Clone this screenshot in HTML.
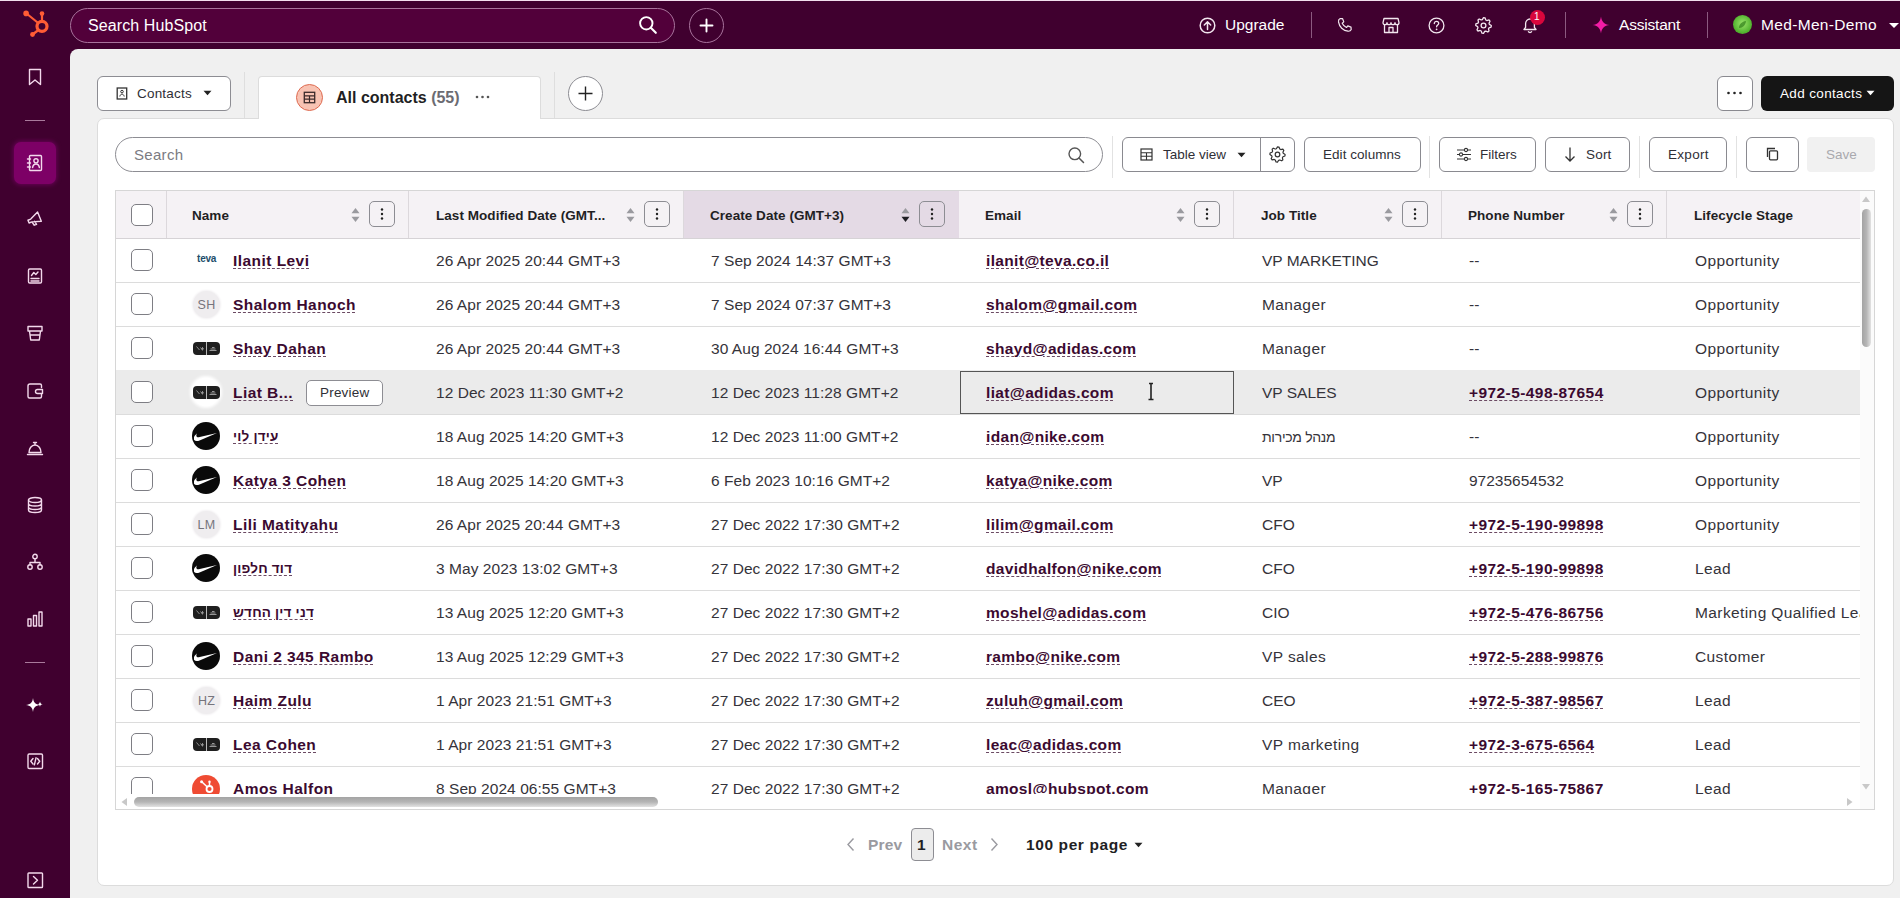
<!DOCTYPE html>
<html><head><meta charset="utf-8">
<style>
*{box-sizing:border-box;margin:0;padding:0}
html,body{width:1900px;height:898px;overflow:hidden;background:#40002f;font-family:"Liberation Sans",sans-serif;color:#2e2d33}
.a{position:absolute}
svg{display:block;position:absolute}
.t{position:absolute;white-space:nowrap;line-height:1}
.btn{position:absolute;background:#fff;border:1px solid #8a8a90;border-radius:6px}
.sep{position:absolute;width:1px;background:#d6d6d6}
.lk{color:#3b0a30;font-weight:700;text-decoration:underline dashed #6b4a63;text-decoration-thickness:1px;text-underline-offset:2px}
.cb{position:absolute;width:22px;height:22px;border:1.3px solid #7e7e84;border-radius:5px;background:#fff}
</style></head><body>

<div class="a" style="left:0;top:0;width:1900px;height:1px;background:#f3dfee"></div>
<svg style="left:20px;top:8px" width="32" height="32" viewBox="0 0 32 32">
 <g stroke="#ff5c35" fill="none" stroke-linecap="round">
  <circle cx="22" cy="18.3" r="5" stroke-width="3.2"/>
  <line x1="22" y1="13" x2="22" y2="6" stroke-width="2.2"/>
  <line x1="18.2" y1="15" x2="6.5" y2="5.5" stroke-width="2.2"/>
  <line x1="18.5" y1="22" x2="12.5" y2="26.5" stroke-width="2.4"/>
 </g>
 <circle cx="22" cy="5.6" r="2.3" fill="#ff5c35"/>
 <circle cx="6.1" cy="5.4" r="2.8" fill="#ff5c35"/>
 <circle cx="12.5" cy="26.5" r="2.4" fill="#ff5c35"/>
</svg>
<div class="a" style="left:70px;top:8px;width:605px;height:35px;border:1px solid #a8739c;border-radius:18px;background:#52003a"></div>
<div class="t" style="left:88px;top:18px;font-size:16px;color:#fff;letter-spacing:0.1px">Search HubSpot</div>
<svg style="left:638px;top:15px" width="20" height="20" viewBox="0 0 20 20"><circle cx="8.3" cy="8.3" r="6.2" stroke="#fff" stroke-width="1.9" fill="none"/><line x1="12.8" y1="12.8" x2="17.8" y2="17.8" stroke="#fff" stroke-width="2.1" stroke-linecap="round"/></svg>
<div class="a" style="left:689px;top:8px;width:35px;height:35px;border:1px solid #a8739c;border-radius:50%"></div>
<svg style="left:697px;top:16px" width="19" height="19" viewBox="0 0 19 19"><path d="M9.5 3.5v12M3.5 9.5h12" stroke="#fff" stroke-width="1.9" stroke-linecap="round"/></svg>
<svg style="left:1199px;top:17px" width="17" height="17" viewBox="0 0 17 17"><circle cx="8.5" cy="8.5" r="7.3" stroke="#f2e6ef" stroke-width="1.5" fill="none"/><path d="M8.5 12.5V4.8M5.3 8l3.2-3.2L11.7 8" stroke="#f2e6ef" stroke-width="1.5" fill="none" stroke-linecap="round" stroke-linejoin="round"/></svg>
<div class="t" style="left:1225px;top:17px;font-size:15.5px;color:#fff">Upgrade</div>
<div class="a" style="left:1311px;top:12px;width:1px;height:26px;background:#8c5a80"></div>
<svg style="left:1337px;top:17px" width="16" height="16" viewBox="0 0 16 16"><path d="M3.2 1.5l2.4 0.2 1.2 3.2-1.6 1.3c0.9 2 2.3 3.4 4.3 4.3l1.3-1.6 3.2 1.2 0.2 2.4c-0.6 1.3-1.8 1.9-3.2 1.7C6.1 13.7 2.3 9.9 1.5 4.9 1.3 3.4 1.9 2.1 3.2 1.5z" stroke="#f2e6ef" stroke-width="1.2" fill="none" stroke-linejoin="round"/></svg>
<svg style="left:1382px;top:16px" width="18" height="18" viewBox="0 0 18 18"><path d="M2 2.5h14l1 4.2c0 1.2-1 2-2 2s-2-0.8-2-2c0 1.2-1 2-2 2s-2-0.8-2-2c0 1.2-1 2-2 2s-2-0.8-2-2c0 1.2-1 2-2 2s-2-0.8-2-2z M2.5 9v7.5h13V9 M7 16.5v-5h4v5" stroke="#f2e6ef" stroke-width="1.3" fill="none" stroke-linejoin="round"/></svg>
<svg style="left:1428px;top:17px" width="17" height="17" viewBox="0 0 17 17"><circle cx="8.5" cy="8.5" r="7.4" stroke="#f2e6ef" stroke-width="1.3" fill="none"/><path d="M6.3 6.5c0-1.3 1-2.1 2.2-2.1s2.2 0.8 2.2 2c0 1.6-2.1 1.7-2.1 3.4" stroke="#f2e6ef" stroke-width="1.3" fill="none" stroke-linecap="round"/><circle cx="8.6" cy="12.3" r="0.9" fill="#f2e6ef"/></svg>
<svg style="left:1475px;top:17px" width="17" height="17" viewBox="0 0 17 17"><path d="M16.30 8.50 L16.15 10.02 L14.04 10.80 L13.49 11.83 L14.02 14.02 L12.83 14.99 L10.80 14.04 L9.67 14.38 L8.50 16.30 L6.98 16.15 L6.20 14.04 L5.17 13.49 L2.98 14.02 L2.01 12.83 L2.96 10.80 L2.62 9.67 L0.70 8.50 L0.85 6.98 L2.96 6.20 L3.51 5.17 L2.98 2.98 L4.17 2.01 L6.20 2.96 L7.33 2.62 L8.50 0.70 L10.02 0.85 L10.80 2.96 L11.83 3.51 L14.02 2.98 L14.99 4.17 L14.04 6.20 L14.38 7.33Z" stroke="#f2e6ef" stroke-width="1.3" fill="none" stroke-linejoin="round"/><circle cx="8.5" cy="8.5" r="2.4" stroke="#f2e6ef" stroke-width="1.3" fill="none"/></svg>
<svg style="left:1521px;top:16px" width="18" height="18" viewBox="0 0 18 18"><path d="M3 13.5h12l-1.6-2.2V7.6c0-2.6-1.9-4.6-4.4-4.6S4.6 5 4.6 7.6v3.7z M7.2 15.2c0.4 0.9 1 1.3 1.8 1.3s1.4-0.4 1.8-1.3" stroke="#f2e6ef" stroke-width="1.3" fill="none" stroke-linejoin="round"/></svg>
<div class="a" style="left:1530px;top:10px;width:15px;height:15px;border-radius:50%;background:#d8063c"></div>
<div class="t" style="left:1534px;top:12px;font-size:10px;color:#fff">1</div>
<div class="a" style="left:1565px;top:12px;width:1px;height:26px;background:#8c5a80"></div>
<svg style="left:1592px;top:16px" width="18" height="18" viewBox="0 0 18 18"><path d="M9 0.5C9.6 5.6 12.4 8.4 17.5 9 12.4 9.6 9.6 12.4 9 17.5 8.4 12.4 5.6 9.6 0.5 9 5.6 8.4 8.4 5.6 9 0.5z" fill="#f21ca6"/></svg>
<div class="t" style="left:1619px;top:17px;font-size:15.5px;color:#fff;letter-spacing:-0.2px">Assistant</div>
<div class="a" style="left:1707px;top:12px;width:1px;height:26px;background:#8c5a80"></div>
<div class="a" style="left:1733px;top:15px;width:19px;height:19px;border-radius:50%;background:radial-gradient(circle at 50% 45%,#9be36a,#4caf2a 70%,#cfe9bf 100%)"></div>
<svg style="left:1737px;top:19px" width="11" height="11" viewBox="0 0 11 11"><path d="M2 9c0-4 3-6.5 7-7-0.5 4-3 7-7 7z" fill="#2f7d1a" opacity="0.7"/></svg>
<div class="t" style="left:1761px;top:17px;font-size:15.5px;color:#fff;letter-spacing:0.33px">Med-Men-Demo</div>
<svg style="left:1888px;top:22px" width="12" height="7" viewBox="0 0 12 7"><path d="M1 1h10L6 6z" fill="#fff"/></svg>
<svg style="left:26px;top:68px" width="18" height="18" viewBox="0 0 18 18"><path d="M3.5 1.5h11v15l-5.5-4.5-5.5 4.5z" stroke="#f3d9ec" stroke-width="1.4" fill="none" stroke-linejoin="round" stroke-linecap="round"/></svg>
<div class="a" style="left:25px;top:120px;width:20px;height:1px;background:#a97a9c"></div>
<div class="a" style="left:14px;top:142px;width:42px;height:42px;border-radius:7px;background:#7d0066;box-shadow:0 0 4px 1px #6a0058"></div>
<svg style="left:26px;top:154px" width="18" height="18" viewBox="0 0 18 18"><rect x="3.5" y="1.5" width="12" height="15" rx="1" stroke="#f3d9ec" stroke-width="1.4" fill="none" stroke-linejoin="round" stroke-linecap="round"/><circle cx="10" cy="6.8" r="2.1" stroke="#f3d9ec" stroke-width="1.4" fill="none" stroke-linejoin="round" stroke-linecap="round"/><path d="M6.6 13.5c0.4-2.2 1.7-3.5 3.4-3.5s3 1.3 3.4 3.5" stroke="#f3d9ec" stroke-width="1.4" fill="none" stroke-linejoin="round" stroke-linecap="round"/><path d="M1.5 5h3M1.5 9h3M1.5 13h3" stroke="#f3d9ec" stroke-width="1.4" fill="none" stroke-linejoin="round" stroke-linecap="round"/></svg>
<svg style="left:26px;top:210px" width="18" height="18" viewBox="0 0 18 18"><g transform="rotate(-22 9 9)"><path d="M2 7.5h3l9-4v10l-9-3H2z M5 10.5l1 4h2.5l-0.8-3.5" stroke="#f3d9ec" stroke-width="1.4" fill="none" stroke-linejoin="round" stroke-linecap="round"/></g></svg>
<svg style="left:26px;top:267px" width="18" height="18" viewBox="0 0 18 18"><rect x="2.5" y="2" width="13" height="14" rx="1.2" stroke="#f3d9ec" stroke-width="1.4" fill="none" stroke-linejoin="round" stroke-linecap="round"/><path d="M5 11.5h8M5 14h8M5.5 8.5l2.3-3 2 2 2.2-2.5" stroke="#f3d9ec" stroke-width="1.4" fill="none" stroke-linejoin="round" stroke-linecap="round"/></svg>
<svg style="left:26px;top:324px" width="18" height="18" viewBox="0 0 18 18"><path d="M2 2.5h14v4.5H2z M3.5 7l1.2 9h8.6l1.2-9 M4.3 11h9.4" stroke="#f3d9ec" stroke-width="1.4" fill="none" stroke-linejoin="round" stroke-linecap="round"/></svg>
<svg style="left:26px;top:382px" width="18" height="18" viewBox="0 0 18 18"><path d="M15.5 5.5V3.5c0-1-0.6-1.5-1.5-1.5H4C2.8 2 2 2.8 2 4v10.5c0 1 0.8 1.5 1.5 1.5H14c1 0 1.5-0.6 1.5-1.5v-2 M11.5 7.5h5v4h-5c-1 0-2-0.8-2-2s1-2 2-2z" stroke="#f3d9ec" stroke-width="1.4" fill="none" stroke-linejoin="round" stroke-linecap="round"/></svg>
<svg style="left:26px;top:439px" width="18" height="18" viewBox="0 0 18 18"><path d="M3 13.5c0-4 2.5-7.5 6-7.5s6 3.5 6 7.5z M1.5 15.5h15 M9 6V3.8 M7.5 3.5h3" stroke="#f3d9ec" stroke-width="1.4" fill="none" stroke-linejoin="round" stroke-linecap="round"/></svg>
<svg style="left:26px;top:496px" width="18" height="18" viewBox="0 0 18 18"><ellipse cx="9" cy="4" rx="6.5" ry="2.5" stroke="#f3d9ec" stroke-width="1.4" fill="none" stroke-linejoin="round" stroke-linecap="round"/><path d="M2.5 4v10c0 1.4 2.9 2.5 6.5 2.5s6.5-1.1 6.5-2.5V4 M2.5 7.5c0 1.4 2.9 2.5 6.5 2.5s6.5-1.1 6.5-2.5 M2.5 11c0 1.4 2.9 2.5 6.5 2.5s6.5-1.1 6.5-2.5" stroke="#f3d9ec" stroke-width="1.4" fill="none" stroke-linejoin="round" stroke-linecap="round"/></svg>
<svg style="left:26px;top:553px" width="18" height="18" viewBox="0 0 18 18"><circle cx="9" cy="3.5" r="2.2" stroke="#f3d9ec" stroke-width="1.4" fill="none" stroke-linejoin="round" stroke-linecap="round"/><circle cx="4" cy="14" r="2.2" stroke="#f3d9ec" stroke-width="1.4" fill="none" stroke-linejoin="round" stroke-linecap="round"/><circle cx="14" cy="14" r="2.2" stroke="#f3d9ec" stroke-width="1.4" fill="none" stroke-linejoin="round" stroke-linecap="round"/><path d="M9 5.7v3.8M4 11.8V9.5h10v2.3" stroke="#f3d9ec" stroke-width="1.4" fill="none" stroke-linejoin="round" stroke-linecap="round"/></svg>
<svg style="left:26px;top:610px" width="18" height="18" viewBox="0 0 18 18"><rect x="2" y="9" width="3" height="7" stroke="#f3d9ec" stroke-width="1.4" fill="none" stroke-linejoin="round" stroke-linecap="round"/><rect x="7.5" y="5.5" width="3" height="10.5" stroke="#f3d9ec" stroke-width="1.4" fill="none" stroke-linejoin="round" stroke-linecap="round"/><rect x="13" y="2" width="3" height="14" stroke="#f3d9ec" stroke-width="1.4" fill="none" stroke-linejoin="round" stroke-linecap="round"/></svg>
<div class="a" style="left:25px;top:662px;width:20px;height:1px;background:#a97a9c"></div>
<svg style="left:26px;top:696px" width="18" height="18" viewBox="0 0 18 18"><path d="M7 2C7.5 6.5 9.5 8.5 14 9 9.5 9.5 7.5 11.5 7 16 6.5 11.5 4.5 9.5 0 9 4.5 8.5 6.5 6.5 7 2z" fill="#fff"/><path d="M14 5.5c0.2 1.7 1 2.5 2.7 2.7-1.7 0.2-2.5 1-2.7 2.7-0.2-1.7-1-2.5-2.7-2.7 1.7-0.2 2.5-1 2.7-2.7z" fill="#fff"/></svg>
<svg style="left:26px;top:752px" width="18" height="18" viewBox="0 0 18 18"><rect x="2" y="2" width="14.5" height="14.5" rx="1.2" stroke="#f3d9ec" stroke-width="1.4" fill="none" stroke-linejoin="round" stroke-linecap="round"/><path d="M7 6.5L4.8 9.2 7 12M11.5 6.5l2.2 2.7-2.2 2.8M10 5.8l-1.6 7" stroke="#f3d9ec" stroke-width="1.4" fill="none" stroke-linejoin="round" stroke-linecap="round"/></svg>
<svg style="left:26px;top:871px" width="18" height="18" viewBox="0 0 18 18"><rect x="2" y="2" width="14.5" height="14.5" rx="0.8" stroke="#f3d9ec" stroke-width="1.4" fill="none" stroke-linejoin="round" stroke-linecap="round"/><path d="M7.5 5.5l4 3.8-4 3.8" stroke="#f3d9ec" stroke-width="1.4" fill="none" stroke-linejoin="round" stroke-linecap="round"/></svg>
<div class="a" style="left:70px;top:49px;width:1830px;height:849px;background:#f0f0f0;border-top-left-radius:8px"></div>
<div class="btn" style="left:97px;top:76px;width:134px;height:35px;border-color:#8d8d93"></div>
<svg style="left:116px;top:87px" width="12" height="13" viewBox="0 0 12 13"><rect x="1.2" y="1" width="9.5" height="11" stroke="#333" stroke-width="1.3" fill="none"/><circle cx="6" cy="4.6" r="1.3" stroke="#333" stroke-width="1" fill="none"/><path d="M3.8 9.5c0.3-1.5 1.1-2.3 2.2-2.3s1.9 0.8 2.2 2.3" stroke="#333" stroke-width="1" fill="none"/></svg>
<div class="t" style="left:137px;top:87px;font-size:13.5px;color:#2f2f36;letter-spacing:0.2px">Contacts</div>
<svg style="left:203px;top:90px" width="9" height="6" viewBox="0 0 9 6"><path d="M0.5 0.8h8L4.5 5.2z" fill="#222"/></svg>
<div class="sep" style="left:244px;top:72px;height:47px;background:#dedede"></div>
<div class="a" style="left:258px;top:76px;width:283px;height:44px;background:#fff;border:1px solid #dcdcdc;border-bottom:none;border-radius:4px 4px 0 0"></div>
<div class="a" style="left:296px;top:84px;width:27px;height:27px;border-radius:50%;background:#f8c3b3;border:1px solid #de6a50"></div>
<svg style="left:303px;top:91px" width="13" height="13" viewBox="0 0 13 13"><rect x="1.3" y="1.3" width="10.4" height="10.4" stroke="#3a2a2a" stroke-width="1.3" fill="none"/><path d="M1.3 4.8h10.4M1.3 8.2h10.4M6.5 4.8v7" stroke="#3a2a2a" stroke-width="1.2"/></svg>
<div class="t" style="left:336px;top:90px;font-size:16px;font-weight:700;color:#1f1f24;letter-spacing:0px">All contacts <span style="color:#6b6b72">(55)</span></div>
<svg style="left:475px;top:95px" width="15" height="4" viewBox="0 0 15 4"><circle cx="2" cy="2" r="1.3" fill="#555"/><circle cx="7.5" cy="2" r="1.3" fill="#555"/><circle cx="13" cy="2" r="1.3" fill="#555"/></svg>
<div class="sep" style="left:554px;top:72px;height:47px;background:#dedede"></div>
<div class="a" style="left:568px;top:76px;width:35px;height:35px;border-radius:50%;background:#fff;border:1px solid #8d8d93"></div>
<svg style="left:576px;top:84px" width="19" height="19" viewBox="0 0 19 19"><path d="M9.5 2.5v14M2.5 9.5h14" stroke="#222" stroke-width="1.4"/></svg>
<div class="btn" style="left:1717px;top:76px;width:36px;height:35px"></div>
<svg style="left:1726px;top:91px" width="17" height="4" viewBox="0 0 17 4"><circle cx="2.5" cy="2" r="1.3" fill="#222"/><circle cx="8.5" cy="2" r="1.3" fill="#222"/><circle cx="14.5" cy="2" r="1.3" fill="#222"/></svg>
<div class="a" style="left:1761px;top:76px;width:133px;height:35px;background:#151515;border-radius:6px"></div>
<div class="t" style="left:1780px;top:87px;font-size:13.5px;color:#fff;letter-spacing:0.35px">Add contacts</div>
<svg style="left:1866px;top:90px" width="9" height="6" viewBox="0 0 9 6"><path d="M0.5 0.8h8L4.5 5.2z" fill="#fff"/></svg>
<div class="a" style="left:97px;top:118px;width:1797px;height:768px;background:#fff;border:1px solid #dcdcdc;border-radius:7px"></div>
<div class="a" style="left:259px;top:117px;width:281px;height:3px;background:#fff"></div>
<div class="a" style="left:115px;top:137px;width:988px;height:35px;border:1px solid #8d8d93;border-radius:18px;background:#fff"></div>
<div class="t" style="left:134px;top:147px;font-size:15px;color:#7b7b82;letter-spacing:0.3px">Search</div>
<svg style="left:1067px;top:146px" width="18" height="18" viewBox="0 0 18 18"><circle cx="7.8" cy="7.8" r="5.8" stroke="#555" stroke-width="1.4" fill="none"/><path d="M12 12l4.5 4.5" stroke="#555" stroke-width="1.5" stroke-linecap="round"/></svg>
<div class="sep" style="left:1112px;top:136px;height:42px;background:#e2e2e2"></div>
<div class="btn" style="left:1122px;top:137px;width:173px;height:35px"></div>
<div class="a" style="left:1260px;top:137px;width:1px;height:35px;background:#8d8d93"></div>
<svg style="left:1140px;top:148px" width="13" height="13" viewBox="0 0 13 13"><rect x="1" y="1" width="11" height="11" stroke="#333" stroke-width="1.2" fill="none"/><path d="M1 4.7h11M1 8.3h11M6.5 4.7V12" stroke="#333" stroke-width="1.1"/></svg>
<div class="t" style="left:1163px;top:148px;font-size:13.5px;color:#2f2f36;letter-spacing:0px">Table view</div>
<svg style="left:1237px;top:152px" width="9" height="6" viewBox="0 0 9 6"><path d="M0.5 0.8h8L4.5 5.2z" fill="#222"/></svg>
<svg style="left:1269px;top:146px" width="17" height="17" viewBox="0 0 17 17"><path d="M16.10 8.50 L15.95 9.98 L13.95 10.76 L13.41 11.78 L13.87 13.87 L12.72 14.82 L10.76 13.95 L9.65 14.29 L8.50 16.10 L7.02 15.95 L6.24 13.95 L5.22 13.41 L3.13 13.87 L2.18 12.72 L3.05 10.76 L2.71 9.65 L0.90 8.50 L1.05 7.02 L3.05 6.24 L3.59 5.22 L3.13 3.13 L4.28 2.18 L6.24 3.05 L7.35 2.71 L8.50 0.90 L9.98 1.05 L10.76 3.05 L11.78 3.59 L13.87 3.13 L14.82 4.28 L13.95 6.24 L14.29 7.35Z" stroke="#333" stroke-width="1.2" fill="none" stroke-linejoin="round"/><circle cx="8.5" cy="8.5" r="2.3" stroke="#333" stroke-width="1.2" fill="none"/></svg>
<div class="btn" style="left:1304px;top:137px;width:117px;height:35px"></div>
<div class="t" style="left:1323px;top:148px;font-size:13.5px;color:#2f2f36;letter-spacing:0.05px">Edit columns</div>
<div class="sep" style="left:1429px;top:136px;height:42px;background:#e2e2e2"></div>
<div class="btn" style="left:1439px;top:137px;width:97px;height:35px"></div>
<svg style="left:1456px;top:147px" width="16" height="15" viewBox="0 0 16 15"><path d="M1 3h14M1 7.5h14M1 12h14" stroke="#333" stroke-width="1.2"/><circle cx="10" cy="3" r="1.6" fill="#fff" stroke="#333" stroke-width="1.1"/><circle cx="5" cy="7.5" r="1.6" fill="#fff" stroke="#333" stroke-width="1.1"/><circle cx="10" cy="12" r="1.6" fill="#fff" stroke="#333" stroke-width="1.1"/></svg>
<div class="t" style="left:1480px;top:148px;font-size:13.5px;color:#2f2f36;letter-spacing:0px">Filters</div>
<div class="btn" style="left:1545px;top:137px;width:85px;height:35px"></div>
<svg style="left:1563px;top:146px" width="14" height="17" viewBox="0 0 14 17"><path d="M7 1.5v13.5M2.5 10.5L7 15l4.5-4.5" stroke="#333" stroke-width="1.3" fill="none"/></svg>
<div class="t" style="left:1586px;top:148px;font-size:13.5px;color:#2f2f36;letter-spacing:0.2px">Sort</div>
<div class="sep" style="left:1639px;top:136px;height:42px;background:#e2e2e2"></div>
<div class="btn" style="left:1649px;top:137px;width:78px;height:35px"></div>
<div class="t" style="left:1668px;top:148px;font-size:13.5px;color:#2f2f36;letter-spacing:0.3px">Export</div>
<div class="sep" style="left:1736px;top:136px;height:42px;background:#e2e2e2"></div>
<div class="btn" style="left:1746px;top:137px;width:53px;height:35px"></div>
<svg style="left:1764px;top:146px" width="16" height="16" viewBox="0 0 16 16"><path d="M3.5 11V2.5H11" stroke="#333" stroke-width="1.3" fill="none"/><rect x="5.5" y="4.8" width="8" height="9" rx="1" stroke="#333" stroke-width="1.3" fill="none"/></svg>
<div class="a" style="left:1807px;top:137px;width:68px;height:35px;background:#f1f1f1;border-radius:4px"></div>
<div class="t" style="left:1826px;top:148px;font-size:13.5px;color:#a9a9ae;letter-spacing:0px">Save</div>
<div class="a" style="left:115px;top:190px;width:1760px;height:620px;border:1px solid #d6d6d6;background:#fff;overflow:hidden" id="tbl">
<div class="a" style="left:0;top:0;width:1744px;height:47px;background:#f5f2f5"></div>
<div class="a" style="left:567px;top:0;width:276px;height:47px;background:#e4dae5"></div>
<div class="a" style="left:0;top:47px;width:1744px;height:1px;background:#d6d3d6"></div>
<div class="a" style="left:50px;top:0;width:1px;height:47px;background:#dcd8dc"></div>
<div class="a" style="left:292px;top:0;width:1px;height:47px;background:#dcd8dc"></div>
<div class="a" style="left:567px;top:0;width:1px;height:47px;background:#dcd8dc"></div>
<div class="a" style="left:1117px;top:0;width:1px;height:47px;background:#dcd8dc"></div>
<div class="a" style="left:1325px;top:0;width:1px;height:47px;background:#dcd8dc"></div>
<div class="a" style="left:1550px;top:0;width:1px;height:47px;background:#dcd8dc"></div>
<div class="cb" style="left:15px;top:13px"></div>
<div class="t" style="left:76px;top:18px;font-size:13.5px;font-weight:700;color:#1f1f24;letter-spacing:0.05px">Name</div>
<svg style="left:235px;top:16px" width="9" height="16" viewBox="0 0 9 16"><path d="M4.5 1L8.5 6.2H0.5z" fill="#9a9a9f"/><path d="M4.5 15L8.5 9.8H0.5z" fill="#9a9a9f"/></svg>
<div class="a" style="left:253px;top:10px;width:26px;height:26px;border:1px solid #8d8d93;border-radius:5px;background:transparent"></div>
<svg style="left:264px;top:16px" width="4" height="14" viewBox="0 0 4 14"><circle cx="2" cy="2.5" r="1.2" fill="#222"/><circle cx="2" cy="7" r="1.2" fill="#222"/><circle cx="2" cy="11.5" r="1.2" fill="#222"/></svg>
<div class="t" style="left:320px;top:18px;font-size:13.5px;font-weight:700;color:#1f1f24;letter-spacing:0.05px">Last Modified Date (GMT...</div>
<svg style="left:510px;top:16px" width="9" height="16" viewBox="0 0 9 16"><path d="M4.5 1L8.5 6.2H0.5z" fill="#9a9a9f"/><path d="M4.5 15L8.5 9.8H0.5z" fill="#9a9a9f"/></svg>
<div class="a" style="left:528px;top:10px;width:26px;height:26px;border:1px solid #8d8d93;border-radius:5px;background:transparent"></div>
<svg style="left:539px;top:16px" width="4" height="14" viewBox="0 0 4 14"><circle cx="2" cy="2.5" r="1.2" fill="#222"/><circle cx="2" cy="7" r="1.2" fill="#222"/><circle cx="2" cy="11.5" r="1.2" fill="#222"/></svg>
<div class="t" style="left:594px;top:18px;font-size:13.5px;font-weight:700;color:#1f1f24;letter-spacing:0.05px">Create Date (GMT+3)</div>
<svg style="left:785px;top:16px" width="9" height="16" viewBox="0 0 9 16"><path d="M4.5 1L8.5 6.2H0.5z" fill="#9a9a9f"/><path d="M4.5 15L8.5 9.8H0.5z" fill="#1f1f24"/></svg>
<div class="a" style="left:803px;top:10px;width:26px;height:26px;border:1px solid #8d8d93;border-radius:5px;background:transparent"></div>
<svg style="left:814px;top:16px" width="4" height="14" viewBox="0 0 4 14"><circle cx="2" cy="2.5" r="1.2" fill="#222"/><circle cx="2" cy="7" r="1.2" fill="#222"/><circle cx="2" cy="11.5" r="1.2" fill="#222"/></svg>
<div class="t" style="left:869px;top:18px;font-size:13.5px;font-weight:700;color:#1f1f24;letter-spacing:0.05px">Email</div>
<svg style="left:1060px;top:16px" width="9" height="16" viewBox="0 0 9 16"><path d="M4.5 1L8.5 6.2H0.5z" fill="#9a9a9f"/><path d="M4.5 15L8.5 9.8H0.5z" fill="#9a9a9f"/></svg>
<div class="a" style="left:1078px;top:10px;width:26px;height:26px;border:1px solid #8d8d93;border-radius:5px;background:transparent"></div>
<svg style="left:1089px;top:16px" width="4" height="14" viewBox="0 0 4 14"><circle cx="2" cy="2.5" r="1.2" fill="#222"/><circle cx="2" cy="7" r="1.2" fill="#222"/><circle cx="2" cy="11.5" r="1.2" fill="#222"/></svg>
<div class="t" style="left:1145px;top:18px;font-size:13.5px;font-weight:700;color:#1f1f24;letter-spacing:0.05px">Job Title</div>
<svg style="left:1268px;top:16px" width="9" height="16" viewBox="0 0 9 16"><path d="M4.5 1L8.5 6.2H0.5z" fill="#9a9a9f"/><path d="M4.5 15L8.5 9.8H0.5z" fill="#9a9a9f"/></svg>
<div class="a" style="left:1286px;top:10px;width:26px;height:26px;border:1px solid #8d8d93;border-radius:5px;background:transparent"></div>
<svg style="left:1297px;top:16px" width="4" height="14" viewBox="0 0 4 14"><circle cx="2" cy="2.5" r="1.2" fill="#222"/><circle cx="2" cy="7" r="1.2" fill="#222"/><circle cx="2" cy="11.5" r="1.2" fill="#222"/></svg>
<div class="t" style="left:1352px;top:18px;font-size:13.5px;font-weight:700;color:#1f1f24;letter-spacing:0.05px">Phone Number</div>
<svg style="left:1493px;top:16px" width="9" height="16" viewBox="0 0 9 16"><path d="M4.5 1L8.5 6.2H0.5z" fill="#9a9a9f"/><path d="M4.5 15L8.5 9.8H0.5z" fill="#9a9a9f"/></svg>
<div class="a" style="left:1511px;top:10px;width:26px;height:26px;border:1px solid #8d8d93;border-radius:5px;background:transparent"></div>
<svg style="left:1522px;top:16px" width="4" height="14" viewBox="0 0 4 14"><circle cx="2" cy="2.5" r="1.2" fill="#222"/><circle cx="2" cy="7" r="1.2" fill="#222"/><circle cx="2" cy="11.5" r="1.2" fill="#222"/></svg>
<div class="t" style="left:1578px;top:18px;font-size:13.5px;font-weight:700;color:#1f1f24;letter-spacing:0.05px">Lifecycle Stage</div>
<div class="a" style="left:0;top:91px;width:1744px;height:1px;background:#dcdcdc"></div>
<div class="cb" style="left:15px;top:58px"></div>
<div class="t" style="left:81px;top:63px;font-size:10px;font-weight:700;color:#1d4e6b;letter-spacing:-0.2px">teva</div>
<div class="t lk" style="left:117px;top:62px;font-size:15.5px;font-weight:700;color:#3b0a30;letter-spacing:0.45px">Ilanit Levi</div>
<div class="t" style="left:320px;top:62px;font-size:15.5px;color:#35333a;letter-spacing:0.05px">26 Apr 2025 20:44 GMT+3</div>
<div class="t" style="left:595px;top:62px;font-size:15.5px;color:#35333a;letter-spacing:0.05px">7 Sep 2024 14:37 GMT+3</div>
<div class="t lk" style="left:870px;top:62px;font-size:15.5px;font-weight:700;color:#3b0a30;letter-spacing:0.33px">ilanit@teva.co.il</div>
<div class="t" style="left:1146px;top:62px;font-size:15.5px;color:#35333a;letter-spacing:0px">VP MARKETING</div>
<div class="t" style="left:1353px;top:62px;font-size:15.5px;color:#35333a;letter-spacing:0px">--</div>
<div class="t" style="left:1579px;top:62px;font-size:15.5px;color:#35333a;letter-spacing:0.4px">Opportunity</div>
<div class="a" style="left:0;top:135px;width:1744px;height:1px;background:#dcdcdc"></div>
<div class="cb" style="left:15px;top:102px"></div>
<div class="a" style="left:77px;top:100px;width:27px;height:27px;border-radius:50%;background:#efedef;box-shadow:0 0 2px 1px #f3f1f3"></div>
<div class="t" style="left:77px;top:108px;width:27px;text-align:center;font-size:12.5px;color:#76747c;letter-spacing:0.2px">SH</div>
<div class="t lk" style="left:117px;top:106px;font-size:15.5px;font-weight:700;color:#3b0a30;letter-spacing:0.45px">Shalom Hanoch</div>
<div class="t" style="left:320px;top:106px;font-size:15.5px;color:#35333a;letter-spacing:0.05px">26 Apr 2025 20:44 GMT+3</div>
<div class="t" style="left:595px;top:106px;font-size:15.5px;color:#35333a;letter-spacing:0.05px">7 Sep 2024 07:37 GMT+3</div>
<div class="t lk" style="left:870px;top:106px;font-size:15.5px;font-weight:700;color:#3b0a30;letter-spacing:0.33px">shalom@gmail.com</div>
<div class="t" style="left:1146px;top:106px;font-size:15.5px;color:#35333a;letter-spacing:0.4px">Manager</div>
<div class="t" style="left:1353px;top:106px;font-size:15.5px;color:#35333a;letter-spacing:0px">--</div>
<div class="t" style="left:1579px;top:106px;font-size:15.5px;color:#35333a;letter-spacing:0.4px">Opportunity</div>
<div class="a" style="left:0;top:179px;width:1744px;height:1px;background:#dcdcdc"></div>
<div class="cb" style="left:15px;top:146px"></div>
<div class="a" style="left:77px;top:151px;width:27px;height:13px;border-radius:4px;background:#1f1f1f"></div>
<div class="a" style="left:89.5px;top:151px;width:1px;height:13px;background:#bbb"></div>
<svg style="left:78px;top:153px" width="24" height="9" viewBox="0 0 24 9"><path d="M2.5 2.5l3 3.5M6.5 3.5l2 2.5M8.5 3v3.5M7 4.8h3" stroke="#9a9a9a" stroke-width="0.9"/><path d="M15.5 6.5h7M16.5 5h5M18 3.5h2.5" stroke="#a5a5a5" stroke-width="0.9"/></svg>
<div class="t lk" style="left:117px;top:150px;font-size:15.5px;font-weight:700;color:#3b0a30;letter-spacing:0.45px">Shay Dahan</div>
<div class="t" style="left:320px;top:150px;font-size:15.5px;color:#35333a;letter-spacing:0.05px">26 Apr 2025 20:44 GMT+3</div>
<div class="t" style="left:595px;top:150px;font-size:15.5px;color:#35333a;letter-spacing:0.05px">30 Aug 2024 16:44 GMT+3</div>
<div class="t lk" style="left:870px;top:150px;font-size:15.5px;font-weight:700;color:#3b0a30;letter-spacing:0.33px">shayd@adidas.com</div>
<div class="t" style="left:1146px;top:150px;font-size:15.5px;color:#35333a;letter-spacing:0.4px">Manager</div>
<div class="t" style="left:1353px;top:150px;font-size:15.5px;color:#35333a;letter-spacing:0px">--</div>
<div class="t" style="left:1579px;top:150px;font-size:15.5px;color:#35333a;letter-spacing:0.4px">Opportunity</div>
<div class="a" style="left:0;top:179px;width:1744px;height:44px;background:#ebebeb"></div>
<div class="a" style="left:0;top:223px;width:1744px;height:1px;background:#dcdcdc"></div>
<div class="cb" style="left:15px;top:190px"></div>
<div class="a" style="left:76px;top:187px;width:28px;height:28px;border-radius:50%;background:#fff;box-shadow:0 0 3px 2px #fff"></div>
<div class="a" style="left:77px;top:195px;width:27px;height:13px;border-radius:4px;background:#1f1f1f"></div>
<div class="a" style="left:89.5px;top:195px;width:1px;height:13px;background:#bbb"></div>
<svg style="left:78px;top:197px" width="24" height="9" viewBox="0 0 24 9"><path d="M2.5 2.5l3 3.5M6.5 3.5l2 2.5M8.5 3v3.5M7 4.8h3" stroke="#9a9a9a" stroke-width="0.9"/><path d="M15.5 6.5h7M16.5 5h5M18 3.5h2.5" stroke="#a5a5a5" stroke-width="0.9"/></svg>
<div class="t lk" style="left:117px;top:194px;font-size:15.5px;font-weight:700;color:#3b0a30;letter-spacing:0.45px">Liat B...</div>
<div class="t" style="left:320px;top:194px;font-size:15.5px;color:#35333a;letter-spacing:0.05px">12 Dec 2023 11:30 GMT+2</div>
<div class="t" style="left:595px;top:194px;font-size:15.5px;color:#35333a;letter-spacing:0.05px">12 Dec 2023 11:28 GMT+2</div>
<div class="t lk" style="left:870px;top:194px;font-size:15.5px;font-weight:700;color:#3b0a30;letter-spacing:0.33px">liat@adidas.com</div>
<div class="t" style="left:1146px;top:194px;font-size:15.5px;color:#35333a;letter-spacing:0px">VP SALES</div>
<div class="t lk" style="left:1353px;top:194px;font-size:15.5px;font-weight:700;color:#3b0a30;letter-spacing:0.42px">+972-5-498-87654</div>
<div class="t" style="left:1579px;top:194px;font-size:15.5px;color:#35333a;letter-spacing:0.4px">Opportunity</div>
<div class="a" style="left:0;top:267px;width:1744px;height:1px;background:#dcdcdc"></div>
<div class="cb" style="left:15px;top:234px"></div>
<div class="a" style="left:76px;top:231px;width:28px;height:28px;border-radius:50%;background:#0a0a0a"></div>
<svg style="left:78px;top:241px" width="23" height="10" viewBox="0 7 24 10"><path d="M24 7.8L6.4 15.3c-1.5.6-2.7.9-3.7.9-1.1 0-1.9-.4-2.5-1.2-.8-1-.5-2.6.5-4.2C1.6 9.8 2.4 8.9 3.2 8c-.2.4-1.6 2.9-.1 3.9.3.2.7.3 1.3.3.5 0 1-.1 1.6-.2L24 7.8z" fill="#fff"/></svg>
<div class="t lk" style="left:117px;top:239px;font-size:13.5px;font-weight:700;color:#3b0a30;letter-spacing:0.2px">עידן לוי</div>
<div class="t" style="left:320px;top:238px;font-size:15.5px;color:#35333a;letter-spacing:0.05px">18 Aug 2025 14:20 GMT+3</div>
<div class="t" style="left:595px;top:238px;font-size:15.5px;color:#35333a;letter-spacing:0.05px">12 Dec 2023 11:00 GMT+2</div>
<div class="t lk" style="left:870px;top:238px;font-size:15.5px;font-weight:700;color:#3b0a30;letter-spacing:0.33px">idan@nike.com</div>
<div class="t" style="left:1146px;top:239px;font-size:14px;color:#35333a;letter-spacing:-0.3px">מנהל מכירות</div>
<div class="t" style="left:1353px;top:238px;font-size:15.5px;color:#35333a;letter-spacing:0px">--</div>
<div class="t" style="left:1579px;top:238px;font-size:15.5px;color:#35333a;letter-spacing:0.4px">Opportunity</div>
<div class="a" style="left:0;top:311px;width:1744px;height:1px;background:#dcdcdc"></div>
<div class="cb" style="left:15px;top:278px"></div>
<div class="a" style="left:76px;top:275px;width:28px;height:28px;border-radius:50%;background:#0a0a0a"></div>
<svg style="left:78px;top:285px" width="23" height="10" viewBox="0 7 24 10"><path d="M24 7.8L6.4 15.3c-1.5.6-2.7.9-3.7.9-1.1 0-1.9-.4-2.5-1.2-.8-1-.5-2.6.5-4.2C1.6 9.8 2.4 8.9 3.2 8c-.2.4-1.6 2.9-.1 3.9.3.2.7.3 1.3.3.5 0 1-.1 1.6-.2L24 7.8z" fill="#fff"/></svg>
<div class="t lk" style="left:117px;top:282px;font-size:15.5px;font-weight:700;color:#3b0a30;letter-spacing:0.45px">Katya 3 Cohen</div>
<div class="t" style="left:320px;top:282px;font-size:15.5px;color:#35333a;letter-spacing:0.05px">18 Aug 2025 14:20 GMT+3</div>
<div class="t" style="left:595px;top:282px;font-size:15.5px;color:#35333a;letter-spacing:0.05px">6 Feb 2023 10:16 GMT+2</div>
<div class="t lk" style="left:870px;top:282px;font-size:15.5px;font-weight:700;color:#3b0a30;letter-spacing:0.33px">katya@nike.com</div>
<div class="t" style="left:1146px;top:282px;font-size:15.5px;color:#35333a;letter-spacing:0px">VP</div>
<div class="t" style="left:1353px;top:282px;font-size:15.5px;color:#35333a;letter-spacing:0px">97235654532</div>
<div class="t" style="left:1579px;top:282px;font-size:15.5px;color:#35333a;letter-spacing:0.4px">Opportunity</div>
<div class="a" style="left:0;top:355px;width:1744px;height:1px;background:#dcdcdc"></div>
<div class="cb" style="left:15px;top:322px"></div>
<div class="a" style="left:77px;top:320px;width:27px;height:27px;border-radius:50%;background:#efedef;box-shadow:0 0 2px 1px #f3f1f3"></div>
<div class="t" style="left:77px;top:328px;width:27px;text-align:center;font-size:12.5px;color:#76747c;letter-spacing:0.2px">LM</div>
<div class="t lk" style="left:117px;top:326px;font-size:15.5px;font-weight:700;color:#3b0a30;letter-spacing:0.45px">Lili Matityahu</div>
<div class="t" style="left:320px;top:326px;font-size:15.5px;color:#35333a;letter-spacing:0.05px">26 Apr 2025 20:44 GMT+3</div>
<div class="t" style="left:595px;top:326px;font-size:15.5px;color:#35333a;letter-spacing:0.05px">27 Dec 2022 17:30 GMT+2</div>
<div class="t lk" style="left:870px;top:326px;font-size:15.5px;font-weight:700;color:#3b0a30;letter-spacing:0.33px">lilim@gmail.com</div>
<div class="t" style="left:1146px;top:326px;font-size:15.5px;color:#35333a;letter-spacing:0px">CFO</div>
<div class="t lk" style="left:1353px;top:326px;font-size:15.5px;font-weight:700;color:#3b0a30;letter-spacing:0.42px">+972-5-190-99898</div>
<div class="t" style="left:1579px;top:326px;font-size:15.5px;color:#35333a;letter-spacing:0.4px">Opportunity</div>
<div class="a" style="left:0;top:399px;width:1744px;height:1px;background:#dcdcdc"></div>
<div class="cb" style="left:15px;top:366px"></div>
<div class="a" style="left:76px;top:363px;width:28px;height:28px;border-radius:50%;background:#0a0a0a"></div>
<svg style="left:78px;top:373px" width="23" height="10" viewBox="0 7 24 10"><path d="M24 7.8L6.4 15.3c-1.5.6-2.7.9-3.7.9-1.1 0-1.9-.4-2.5-1.2-.8-1-.5-2.6.5-4.2C1.6 9.8 2.4 8.9 3.2 8c-.2.4-1.6 2.9-.1 3.9.3.2.7.3 1.3.3.5 0 1-.1 1.6-.2L24 7.8z" fill="#fff"/></svg>
<div class="t lk" style="left:117px;top:371px;font-size:13.5px;font-weight:700;color:#3b0a30;letter-spacing:0.2px">דוד חלפון</div>
<div class="t" style="left:320px;top:370px;font-size:15.5px;color:#35333a;letter-spacing:0.05px">3 May 2023 13:02 GMT+3</div>
<div class="t" style="left:595px;top:370px;font-size:15.5px;color:#35333a;letter-spacing:0.05px">27 Dec 2022 17:30 GMT+2</div>
<div class="t lk" style="left:870px;top:370px;font-size:15.5px;font-weight:700;color:#3b0a30;letter-spacing:0.33px">davidhalfon@nike.com</div>
<div class="t" style="left:1146px;top:370px;font-size:15.5px;color:#35333a;letter-spacing:0px">CFO</div>
<div class="t lk" style="left:1353px;top:370px;font-size:15.5px;font-weight:700;color:#3b0a30;letter-spacing:0.42px">+972-5-190-99898</div>
<div class="t" style="left:1579px;top:370px;font-size:15.5px;color:#35333a;letter-spacing:0.4px">Lead</div>
<div class="a" style="left:0;top:443px;width:1744px;height:1px;background:#dcdcdc"></div>
<div class="cb" style="left:15px;top:410px"></div>
<div class="a" style="left:77px;top:415px;width:27px;height:13px;border-radius:4px;background:#1f1f1f"></div>
<div class="a" style="left:89.5px;top:415px;width:1px;height:13px;background:#bbb"></div>
<svg style="left:78px;top:417px" width="24" height="9" viewBox="0 0 24 9"><path d="M2.5 2.5l3 3.5M6.5 3.5l2 2.5M8.5 3v3.5M7 4.8h3" stroke="#9a9a9a" stroke-width="0.9"/><path d="M15.5 6.5h7M16.5 5h5M18 3.5h2.5" stroke="#a5a5a5" stroke-width="0.9"/></svg>
<div class="t lk" style="left:117px;top:415px;font-size:13.5px;font-weight:700;color:#3b0a30;letter-spacing:0.2px">דני דין החדש</div>
<div class="t" style="left:320px;top:414px;font-size:15.5px;color:#35333a;letter-spacing:0.05px">13 Aug 2025 12:20 GMT+3</div>
<div class="t" style="left:595px;top:414px;font-size:15.5px;color:#35333a;letter-spacing:0.05px">27 Dec 2022 17:30 GMT+2</div>
<div class="t lk" style="left:870px;top:414px;font-size:15.5px;font-weight:700;color:#3b0a30;letter-spacing:0.33px">moshel@adidas.com</div>
<div class="t" style="left:1146px;top:414px;font-size:15.5px;color:#35333a;letter-spacing:0px">CIO</div>
<div class="t lk" style="left:1353px;top:414px;font-size:15.5px;font-weight:700;color:#3b0a30;letter-spacing:0.42px">+972-5-476-86756</div>
<div class="t" style="left:1579px;top:414px;font-size:15.5px;color:#35333a;letter-spacing:0.4px">Marketing Qualified Lead</div>
<div class="a" style="left:0;top:487px;width:1744px;height:1px;background:#dcdcdc"></div>
<div class="cb" style="left:15px;top:454px"></div>
<div class="a" style="left:76px;top:451px;width:28px;height:28px;border-radius:50%;background:#0a0a0a"></div>
<svg style="left:78px;top:461px" width="23" height="10" viewBox="0 7 24 10"><path d="M24 7.8L6.4 15.3c-1.5.6-2.7.9-3.7.9-1.1 0-1.9-.4-2.5-1.2-.8-1-.5-2.6.5-4.2C1.6 9.8 2.4 8.9 3.2 8c-.2.4-1.6 2.9-.1 3.9.3.2.7.3 1.3.3.5 0 1-.1 1.6-.2L24 7.8z" fill="#fff"/></svg>
<div class="t lk" style="left:117px;top:458px;font-size:15.5px;font-weight:700;color:#3b0a30;letter-spacing:0.45px">Dani 2 345 Rambo</div>
<div class="t" style="left:320px;top:458px;font-size:15.5px;color:#35333a;letter-spacing:0.05px">13 Aug 2025 12:29 GMT+3</div>
<div class="t" style="left:595px;top:458px;font-size:15.5px;color:#35333a;letter-spacing:0.05px">27 Dec 2022 17:30 GMT+2</div>
<div class="t lk" style="left:870px;top:458px;font-size:15.5px;font-weight:700;color:#3b0a30;letter-spacing:0.33px">rambo@nike.com</div>
<div class="t" style="left:1146px;top:458px;font-size:15.5px;color:#35333a;letter-spacing:0.4px">VP sales</div>
<div class="t lk" style="left:1353px;top:458px;font-size:15.5px;font-weight:700;color:#3b0a30;letter-spacing:0.42px">+972-5-288-99876</div>
<div class="t" style="left:1579px;top:458px;font-size:15.5px;color:#35333a;letter-spacing:0.4px">Customer</div>
<div class="a" style="left:0;top:531px;width:1744px;height:1px;background:#dcdcdc"></div>
<div class="cb" style="left:15px;top:498px"></div>
<div class="a" style="left:77px;top:496px;width:27px;height:27px;border-radius:50%;background:#efedef;box-shadow:0 0 2px 1px #f3f1f3"></div>
<div class="t" style="left:77px;top:504px;width:27px;text-align:center;font-size:12.5px;color:#76747c;letter-spacing:0.2px">HZ</div>
<div class="t lk" style="left:117px;top:502px;font-size:15.5px;font-weight:700;color:#3b0a30;letter-spacing:0.45px">Haim Zulu</div>
<div class="t" style="left:320px;top:502px;font-size:15.5px;color:#35333a;letter-spacing:0.05px">1 Apr 2023 21:51 GMT+3</div>
<div class="t" style="left:595px;top:502px;font-size:15.5px;color:#35333a;letter-spacing:0.05px">27 Dec 2022 17:30 GMT+2</div>
<div class="t lk" style="left:870px;top:502px;font-size:15.5px;font-weight:700;color:#3b0a30;letter-spacing:0.33px">zuluh@gmail.com</div>
<div class="t" style="left:1146px;top:502px;font-size:15.5px;color:#35333a;letter-spacing:0px">CEO</div>
<div class="t lk" style="left:1353px;top:502px;font-size:15.5px;font-weight:700;color:#3b0a30;letter-spacing:0.42px">+972-5-387-98567</div>
<div class="t" style="left:1579px;top:502px;font-size:15.5px;color:#35333a;letter-spacing:0.4px">Lead</div>
<div class="a" style="left:0;top:575px;width:1744px;height:1px;background:#dcdcdc"></div>
<div class="cb" style="left:15px;top:542px"></div>
<div class="a" style="left:77px;top:547px;width:27px;height:13px;border-radius:4px;background:#1f1f1f"></div>
<div class="a" style="left:89.5px;top:547px;width:1px;height:13px;background:#bbb"></div>
<svg style="left:78px;top:549px" width="24" height="9" viewBox="0 0 24 9"><path d="M2.5 2.5l3 3.5M6.5 3.5l2 2.5M8.5 3v3.5M7 4.8h3" stroke="#9a9a9a" stroke-width="0.9"/><path d="M15.5 6.5h7M16.5 5h5M18 3.5h2.5" stroke="#a5a5a5" stroke-width="0.9"/></svg>
<div class="t lk" style="left:117px;top:546px;font-size:15.5px;font-weight:700;color:#3b0a30;letter-spacing:0.45px">Lea Cohen</div>
<div class="t" style="left:320px;top:546px;font-size:15.5px;color:#35333a;letter-spacing:0.05px">1 Apr 2023 21:51 GMT+3</div>
<div class="t" style="left:595px;top:546px;font-size:15.5px;color:#35333a;letter-spacing:0.05px">27 Dec 2022 17:30 GMT+2</div>
<div class="t lk" style="left:870px;top:546px;font-size:15.5px;font-weight:700;color:#3b0a30;letter-spacing:0.33px">leac@adidas.com</div>
<div class="t" style="left:1146px;top:546px;font-size:15.5px;color:#35333a;letter-spacing:0.4px">VP marketing</div>
<div class="t lk" style="left:1353px;top:546px;font-size:15.5px;font-weight:700;color:#3b0a30;letter-spacing:0.42px">+972-3-675-6564</div>
<div class="t" style="left:1579px;top:546px;font-size:15.5px;color:#35333a;letter-spacing:0.4px">Lead</div>
<div class="a" style="left:0;top:619px;width:1744px;height:1px;background:#dcdcdc"></div>
<div class="cb" style="left:15px;top:586px"></div>
<div class="a" style="left:76px;top:584px;width:28px;height:28px;border-radius:50%;background:#ef4b33"></div>
<svg style="left:82px;top:588px" width="18" height="18" viewBox="0 0 18 18"><circle cx="11.5" cy="10" r="3" stroke="#fff" stroke-width="1.8" fill="none"/><path d="M9.3 8L4 3M11.5 7V3" stroke="#fff" stroke-width="1.5"/><circle cx="3.6" cy="2.8" r="1.5" fill="#fff"/><circle cx="11.5" cy="2.8" r="1.2" fill="#fff"/></svg>
<div class="t" style="left:117px;top:590px;font-size:15.5px;font-weight:700;color:#3b0a30;letter-spacing:0.45px">Amos Halfon</div>
<div class="t" style="left:320px;top:590px;font-size:15.5px;color:#35333a;letter-spacing:0.05px">8 Sep 2024 06:55 GMT+3</div>
<div class="t" style="left:595px;top:590px;font-size:15.5px;color:#35333a;letter-spacing:0.05px">27 Dec 2022 17:30 GMT+2</div>
<div class="t" style="left:870px;top:590px;font-size:15.5px;font-weight:700;color:#3b0a30;letter-spacing:0.33px">amosl@hubspot.com</div>
<div class="t" style="left:1146px;top:590px;font-size:15.5px;color:#35333a;letter-spacing:0.4px">Manager</div>
<div class="t" style="left:1353px;top:590px;font-size:15.5px;font-weight:700;color:#3b0a30;letter-spacing:0.42px">+972-5-165-75867</div>
<div class="t" style="left:1579px;top:590px;font-size:15.5px;color:#35333a;letter-spacing:0.4px">Lead</div>
<div class="a" style="left:190px;top:189px;width:77px;height:26px;border:1px solid #8d8d93;border-radius:5px;background:#fff"></div>
<div class="t" style="left:204px;top:195px;font-size:13.5px;color:#2f2f36;letter-spacing:0.2px">Preview</div>
<div class="a" style="left:844px;top:180px;width:274px;height:43px;border:1.5px solid #555"></div>
<svg style="left:1030px;top:191px" width="10" height="20" viewBox="0 0 10 20"><path d="M3 1.5h4M5 1.5v16M2.5 17.5h5" stroke="#222" stroke-width="1.6"/></svg>
<div class="a" style="left:0;top:603px;width:1758px;height:16px;background:#fff"></div>
<div class="a" style="left:18px;top:606px;width:524px;height:10px;border-radius:5px;background:linear-gradient(#a3a3a3,#b5b5b5 50%,#e2e2e2)"></div>
<svg style="left:4px;top:606px" width="8" height="10" viewBox="0 0 8 10"><path d="M7 1L1.5 5 7 9z" fill="#c8c8c8"/></svg>
<svg style="left:1730px;top:606px" width="8" height="10" viewBox="0 0 8 10"><path d="M1 1l5.5 4L1 9z" fill="#c8c8c8"/></svg>
<div class="a" style="left:1744px;top:0;width:14px;height:618px;background:#fbfbfb"></div>
<svg style="left:1745px;top:4px" width="10" height="8" viewBox="0 0 10 8"><path d="M1 7L5 1.5 9 7z" fill="#c8c8c8"/></svg>
<div class="a" style="left:1746px;top:18px;width:9px;height:138px;border-radius:5px;background:linear-gradient(90deg,#a3a3a3,#b5b5b5 50%,#e2e2e2)"></div>
<svg style="left:1745px;top:592px" width="10" height="8" viewBox="0 0 10 8"><path d="M1 1L5 6.5 9 1z" fill="#c8c8c8"/></svg>
</div>
<svg style="left:846px;top:837px" width="9" height="15" viewBox="0 0 9 15"><path d="M7.5 1.5L2 7.5l5.5 6" stroke="#9a9aa0" stroke-width="1.4" fill="none"/></svg>
<div class="t" style="left:868px;top:837px;font-size:15.5px;font-weight:700;color:#9a9aa0;letter-spacing:0.2px">Prev</div>
<div class="a" style="left:911px;top:828px;width:23px;height:33px;border:1px solid #8d8d93;border-radius:4px;background:#ececec"></div>
<div class="t" style="left:917px;top:837px;font-size:15.5px;font-weight:700;color:#1f1f24">1</div>
<div class="t" style="left:942px;top:837px;font-size:15.5px;font-weight:700;color:#9a9aa0;letter-spacing:0.5px">Next</div>
<svg style="left:990px;top:837px" width="9" height="15" viewBox="0 0 9 15"><path d="M1.5 1.5L7 7.5l-5.5 6" stroke="#9a9aa0" stroke-width="1.4" fill="none"/></svg>
<div class="t" style="left:1026px;top:837px;font-size:15.5px;font-weight:700;color:#1f1f24;letter-spacing:0.6px">100 per page</div>
<svg style="left:1134px;top:842px" width="9" height="6" viewBox="0 0 9 6"><path d="M0.5 0.8h8L4.5 5.2z" fill="#222"/></svg>
</body></html>
